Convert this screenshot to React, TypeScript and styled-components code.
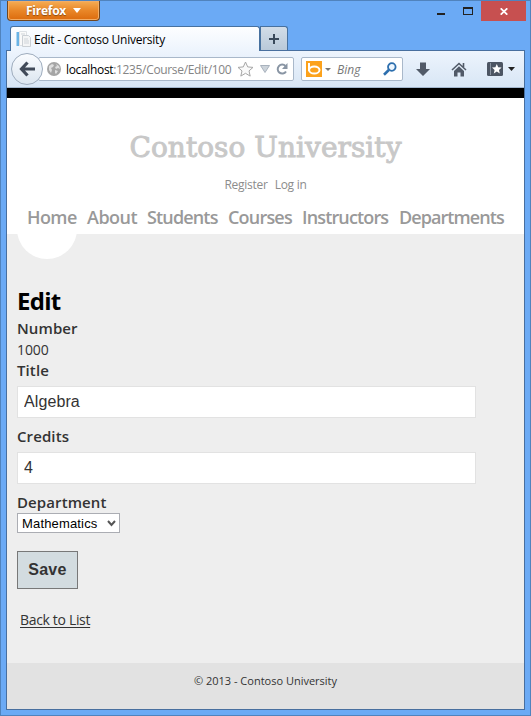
import React from "react";
import styled, { createGlobalStyle } from "styled-components";

const Global = createGlobalStyle`
  * { box-sizing: border-box; }
  html, body { margin: 0; padding: 0; overflow: hidden; }
  body { font-family: "Open Sans", "Noto Sans", sans-serif; color: #333; }
`;

const Window = styled.div`
  width: 531px;
  height: 716px;
  background: #6baaf5;
  border: 1px solid #5083bd;
  display: flex;
  flex-direction: column;
`;

const TitleBar = styled.header`
  height: 25px;
  display: flex;
  align-items: flex-start;
  padding: 0 4px 0 6px;
`;

const FirefoxButton = styled.button`
  width: 93px;
  height: 20px;
  padding: 0 0 1px 18px;
  border: 1px solid #70461f;
  border-top: 0;
  border-radius: 0 0 4px 4px;
  background: linear-gradient(#f5ad55, #e98728 50%, #dc6b0d);
  box-shadow: inset 0 0 0 1px #f2ad65;
  color: #fff;
  display: flex;
  align-items: center;
  gap: 7px;
  font: 700 12px "Open Sans", sans-serif;
  letter-spacing: -0.25px;
  text-shadow: 0 1px 1px #8a4a10;
`;

const WindowControls = styled.div`
  margin-left: auto;
  display: flex;
  height: 20px;
`;

const Control = styled.div<{ $w: number; $close?: boolean; $low?: boolean }>`
  width: ${(p) => p.$w}px;
  padding-top: ${(p) => (p.$low ? 6 : 0)}px;
  display: flex;
  align-items: center;
  justify-content: center;
  background: ${(p) => (p.$close ? "#c75050" : "transparent")};
`;

const TabStrip = styled.div`
  height: 24px;
  display: flex;
  padding-left: 9px;
  flex: none;
`;

const Tab = styled.div`
  width: 250px;
  height: 25px;
  border: 1px solid #47719f;
  border-bottom: 0;
  border-radius: 3px 3px 0 0;
  background: linear-gradient(#fdfeff, #edf4fd);
  display: flex;
  align-items: center;
  padding-left: 5px;
  gap: 3px;
  color: #000;
  font-size: 12px;
  letter-spacing: -0.24px;
  position: relative;
  z-index: 1;
`;

const NewTab = styled.div`
  width: 28px;
  height: 24px;
  border: 1px solid #47719f;
  border-bottom: 0;
  border-radius: 0 3px 0 0;
  background: linear-gradient(#d2dde8, #b9c9d9);
  display: flex;
  align-items: center;
  justify-content: center;
`;

const Client = styled.div`
  margin: 0 5px 5px;
  flex: 1;
  border: 1px solid #486f9f;
  display: flex;
  flex-direction: column;
  min-height: 0;
`;

const Toolbar = styled.nav`
  height: 37px;
  background: linear-gradient(#edf4fd, #d8e6f5);
  display: flex;
  align-items: center;
  padding: 0 8px 0 4px;
  flex: none;
  border-bottom: 1px solid #a3b7ce;
`;

const BackButton = styled.button`
  width: 32px;
  height: 32px;
  flex: none;
  padding: 0;
  border: 1px solid #9eacbd;
  border-radius: 50%;
  background: linear-gradient(#fafcff, #dce6f0);
  display: flex;
  align-items: center;
  justify-content: center;
  position: relative;
  z-index: 1;
`;

const Field = styled.div<{ $w: number }>`
  width: ${(p) => p.$w}px;
  height: 24px;
  flex: none;
  border: 1px solid #a9b8ca;
  border-radius: 2px;
  background: #fff;
  display: flex;
  align-items: center;
`;

const AddressField = styled(Field)`
  margin-left: -5px;
  padding-left: 8px;
`;

const SearchField = styled(Field)`
  margin-left: 7px;
  padding-left: 4px;
`;

const Url = styled.span`
  width: 171px;
  margin-left: 5px;
  font-size: 12px;
  color: #858585;
  white-space: nowrap;
  letter-spacing: -0.34px;
`;

const UrlHost = styled.span`
  color: #000;
`;

const SearchHint = styled.span`
  width: 46px;
  margin-left: 6px;
  font-size: 12px;
  font-style: italic;
  color: #777;
`;

const ToolIcons = styled.div`
  display: flex;
  align-items: center;
  margin-left: 13px;
`;

const Gap = styled.span<{ $w: number }>`
  width: ${(p) => p.$w}px;
  flex: none;
`;

const Page = styled.div`
  flex: 1;
  background: #eee;
  border-top: 10px solid #000;
  display: flex;
  flex-direction: column;
`;

const SiteHeader = styled.div`
  height: 136px;
  background: #fff;
  display: flex;
  flex-direction: column;
  align-items: center;
  flex: none;
`;

const SiteTitle = styled.div`
  height: 48px;
  margin-top: 26px;
  line-height: 48px;
  font-family: "DejaVu Serif", serif;
  font-size: 28px;
  letter-spacing: 0.04px;
  color: #c8c8c8;
  -webkit-text-stroke: 0.9px #c8c8c8;
  white-space: nowrap;
`;

const Account = styled.div`
  height: 20px;
  margin-top: 3px;
  display: flex;
  gap: 7px;
  line-height: 20px;
  font-size: 12px;
  letter-spacing: -0.27px;
  color: #8c8c8c;
`;

const Menu = styled.div`
  align-self: stretch;
  height: 26px;
  margin-top: 9px;
  padding-left: 20px;
  display: flex;
  line-height: 26px;
  font-size: 18px;
  font-weight: 600;
  color: #999;
`;

const MenuItem = styled.a<{ $w: number; $ls: number }>`
  width: ${(p) => p.$w}px;
  letter-spacing: ${(p) => p.$ls}px;
  white-space: nowrap;
  flex: none;
`;

const Notch = styled.div`
  height: 25px;
  padding-left: 10px;
  overflow: hidden;
  flex: none;
  &::before {
    content: "";
    display: block;
    width: 60px;
    height: 60px;
    margin-top: -35px;
    border-radius: 50%;
    background: #fff;
  }
`;

const Main = styled.main`
  flex: 1;
  padding: 25px 10px 0;
  display: flex;
  flex-direction: column;
  align-items: flex-start;
`;

const Heading = styled.h2`
  margin: 0;
  height: 34px;
  line-height: 34px;
  font-size: 24px;
  font-weight: 700;
  letter-spacing: -0.7px;
  color: #000;
`;

const Label = styled.label`
  height: 21px;
  line-height: 21px;
  font-size: 15px;
  font-weight: 600;
  letter-spacing: 0.1px;
`;

const Value = styled.div`
  height: 21px;
  line-height: 21px;
  font-size: 14px;
  letter-spacing: -0.1px;
`;

const TextInput = styled.input`
  width: 459px;
  height: 32px;
  margin: 5px 0 8px;
  padding: 0 6px;
  border: 1px solid #e2e2e2;
  background: #fff;
  color: #333;
  font: 16px "Liberation Sans", sans-serif;
  letter-spacing: 0.1px;
`;

const Select = styled.div`
  width: 103px;
  height: 20px;
  padding: 0 3px 0 4px;
  border: 1px solid #abadb3;
  background: #fff;
  color: #000;
  display: flex;
  align-items: center;
  justify-content: space-between;
  font: 13px "Liberation Sans", sans-serif;
  letter-spacing: 0.16px;
`;

const SaveButton = styled.button`
  width: 61px;
  height: 38px;
  margin-top: 18px;
  padding: 0;
  border: 1px solid #787878;
  background: #d3dce0;
  color: #333;
  font: 700 16px "Liberation Sans", sans-serif;
  letter-spacing: 0.3px;
`;

const BackLink = styled.a`
  margin: 20px 0 0 3px;
  height: 21px;
  line-height: 21px;
  font-size: 14px;
  letter-spacing: -0.33px;
  text-decoration: underline;
  text-underline-offset: 2px;
`;

const Footer = styled.footer`
  height: 46px;
  flex: none;
  padding-top: 8px;
  background: #e2e2e2;
  text-align: center;
  line-height: 20px;
  font-size: 11px;
`;

const Caret = ({ color, w = 7, h = 4 }: { color: string; w?: number; h?: number }) => (
  <svg width={w} height={h} viewBox="0 0 8 4" preserveAspectRatio="none"><path d="M0 0h8L4 4z" fill={color} /></svg>
);

const menu = [
  { text: "Home", w: 60, ls: -0.6 },
  { text: "About", w: 60, ls: -0.5 },
  { text: "Students", w: 81, ls: -0.85 },
  { text: "Courses", w: 74, ls: -0.8 },
  { text: "Instructors", w: 97, ls: -0.85 },
  { text: "Departments", w: 105, ls: -0.93 },
];

export default function App() {
  return (
    <Window>
      <Global />
      <TitleBar>
        <FirefoxButton>Firefox <Caret color="#fff" w={8} h={5} /></FirefoxButton>
        <WindowControls>
          <Control $w={27} $low><svg width="8" height="2"><path d="M0 0h8v2H0z" fill="#222" /></svg></Control>
          <Control $w={27}><svg width="10" height="8"><path d="M0 0h10v8H0zM1 2v5h8V2z" fill="#222" fillRule="evenodd" /></svg></Control>
          <Control $w={45} $close><svg width="8" height="7"><path d="M.7.3 7.3 6.7M7.3.3.7 6.7" stroke="#fff" strokeWidth="1.7" /></svg></Control>
        </WindowControls>
      </TitleBar>
      <TabStrip>
        <Tab>
          <svg width="15" height="16" viewBox="0 0 15 16">
            <path d="M.5 1h2.500v14H.5z" fill="#69b3e5" />
            <path d="M3.500.500h7v14h-7z" fill="#fafafa" stroke="#dde1e5" />
            <path d="M6.500 4.500h6l2 2v9h-8z" fill="#f4f5f6" stroke="#cbd0d5" />
            <path d="M5 3h4M8 8h4M8 10h5M8 12h5" stroke="#cfd4d9" />
          </svg>
          <span>Edit - Contoso University</span>
        </Tab>
        <NewTab><svg width="10" height="10"><path d="M4 0h2v4h4v2H6v4H4V6H0V4h4z" fill="#39495b" /></svg></NewTab>
      </TabStrip>
      <Client>
        <Toolbar>
          <BackButton>
            <svg width="17" height="16" viewBox="0 0 17 16"><path d="M8.500 1.500 2.500 8l6 6.500M3 8h13" fill="none" stroke="#414a59" strokeWidth="3.200" /></svg>
          </BackButton>
          <AddressField $w={256}>
            <svg width="14" height="14" viewBox="0 0 14 14">
              <circle cx="7" cy="7" r="7" fill="#a5a5a5" />
              <path d="M2 4l3-2 2 1-1 2-2 1 1 2-1 3-2-3zM9 2l3 2 1 3-2-1-2 1-1-2 2-1zM8 8l3 1-2 3-1-1z" fill="#dedede" />
            </svg>
            <Url><UrlHost>localhost</UrlHost>:1235/Course/Edit/100</Url>
            <svg width="17" height="16" viewBox="0 0 17 16"><path d="M8.500 1l2.200 4.900 5.300.5-4 3.500 1.200 5.200-4.700-2.800-4.700 2.800L5 9.900 1 6.400l5.300-.5z" fill="#fafafa" stroke="#a6a6a6" /></svg>
            <Gap $w={6} />
            <svg width="10" height="8"><path d="M.5.500h9l-4.500 7z" fill="#ccd3da" stroke="#a8b2bd" /></svg>
            <Gap $w={6} />
            <svg width="12" height="12" viewBox="0 0 12 12"><path d="M9.500 3A4.500 4.500 0 1 0 10 8.500" fill="none" stroke="#8995a4" strokeWidth="2" /><path d="M11.500 0v6H6z" fill="#8995a4" /></svg>
          </AddressField>
          <SearchField $w={102}>
            <svg width="16" height="16" viewBox="0 0 16 16"><path d="M0 0h16v16H0z" fill="#fca21c" /><path d="M3 2v8" fill="none" stroke="#fff" strokeWidth="2" /><ellipse cx="8.300" cy="9" rx="5.200" ry="3.600" fill="none" stroke="#fff" strokeWidth="2" /></svg>
            <Gap $w={3} />
            <Caret color="#777" w={6} h={3} />
            <SearchHint>Bing</SearchHint>
            <svg width="14" height="14" viewBox="0 0 14 14"><circle cx="8.800" cy="5" r="3.800" fill="#eef7ff" stroke="#2d6fae" strokeWidth="1.800" /><path d="M5.800 8 1 12.700" stroke="#2d6fae" strokeWidth="2.600" /></svg>
          </SearchField>
          <ToolIcons>
            <svg width="14" height="15" viewBox="0 0 14 15"><path d="M4 .5h6V7h4l-7 7-7-7h4z" fill="#515a68" /></svg>
            <Gap $w={21} />
            <svg width="16" height="15" viewBox="0 0 16 15"><path d="M1 8l7-6.500L15 8M12.500 1v4" fill="none" stroke="#515a68" strokeWidth="1.600" /><path d="M3 9l5-4.700L13 9v5.500H9.500v-4h-3v4H3z" fill="#515a68" /></svg>
            <Gap $w={20} />
            <svg width="16" height="14" viewBox="0 0 16 14"><rect width="16" height="14" rx="1.500" fill="#4c5563" /><path d="M3.500 1v12" stroke="#8993a0" /><path d="M9.800 2l1.400 3.300 3.400.3-2.600 2.300.8 3.500-3-1.900-3 1.900.8-3.500L5 5.600l3.400-.3z" fill="#fff" /></svg>
            <Gap $w={5} />
            <Caret color="#222" />
          </ToolIcons>
        </Toolbar>
        <Page>
          <SiteHeader>
            <SiteTitle>Contoso University</SiteTitle>
            <Account><span>Register</span><span>Log in</span></Account>
            <Menu>{menu.map((m) => <MenuItem key={m.text} $w={m.w} $ls={m.ls}>{m.text}</MenuItem>)}</Menu>
          </SiteHeader>
          <Notch />
          <Main>
            <Heading>Edit</Heading>
            <Label>Number</Label>
            <Value>1000</Value>
            <Label>Title</Label>
            <TextInput defaultValue="Algebra" />
            <Label>Credits</Label>
            <TextInput defaultValue="4" />
            <Label>Department</Label>
            <Select>Mathematics<svg width="9" height="7"><path d="M1 1l3.500 4L8 1" fill="none" stroke="#555" strokeWidth="2" /></svg></Select>
            <SaveButton>Save</SaveButton>
            <BackLink>Back to List</BackLink>
          </Main>
          <Footer>© 2013 - Contoso University</Footer>
        </Page>
      </Client>
    </Window>
  );
}
